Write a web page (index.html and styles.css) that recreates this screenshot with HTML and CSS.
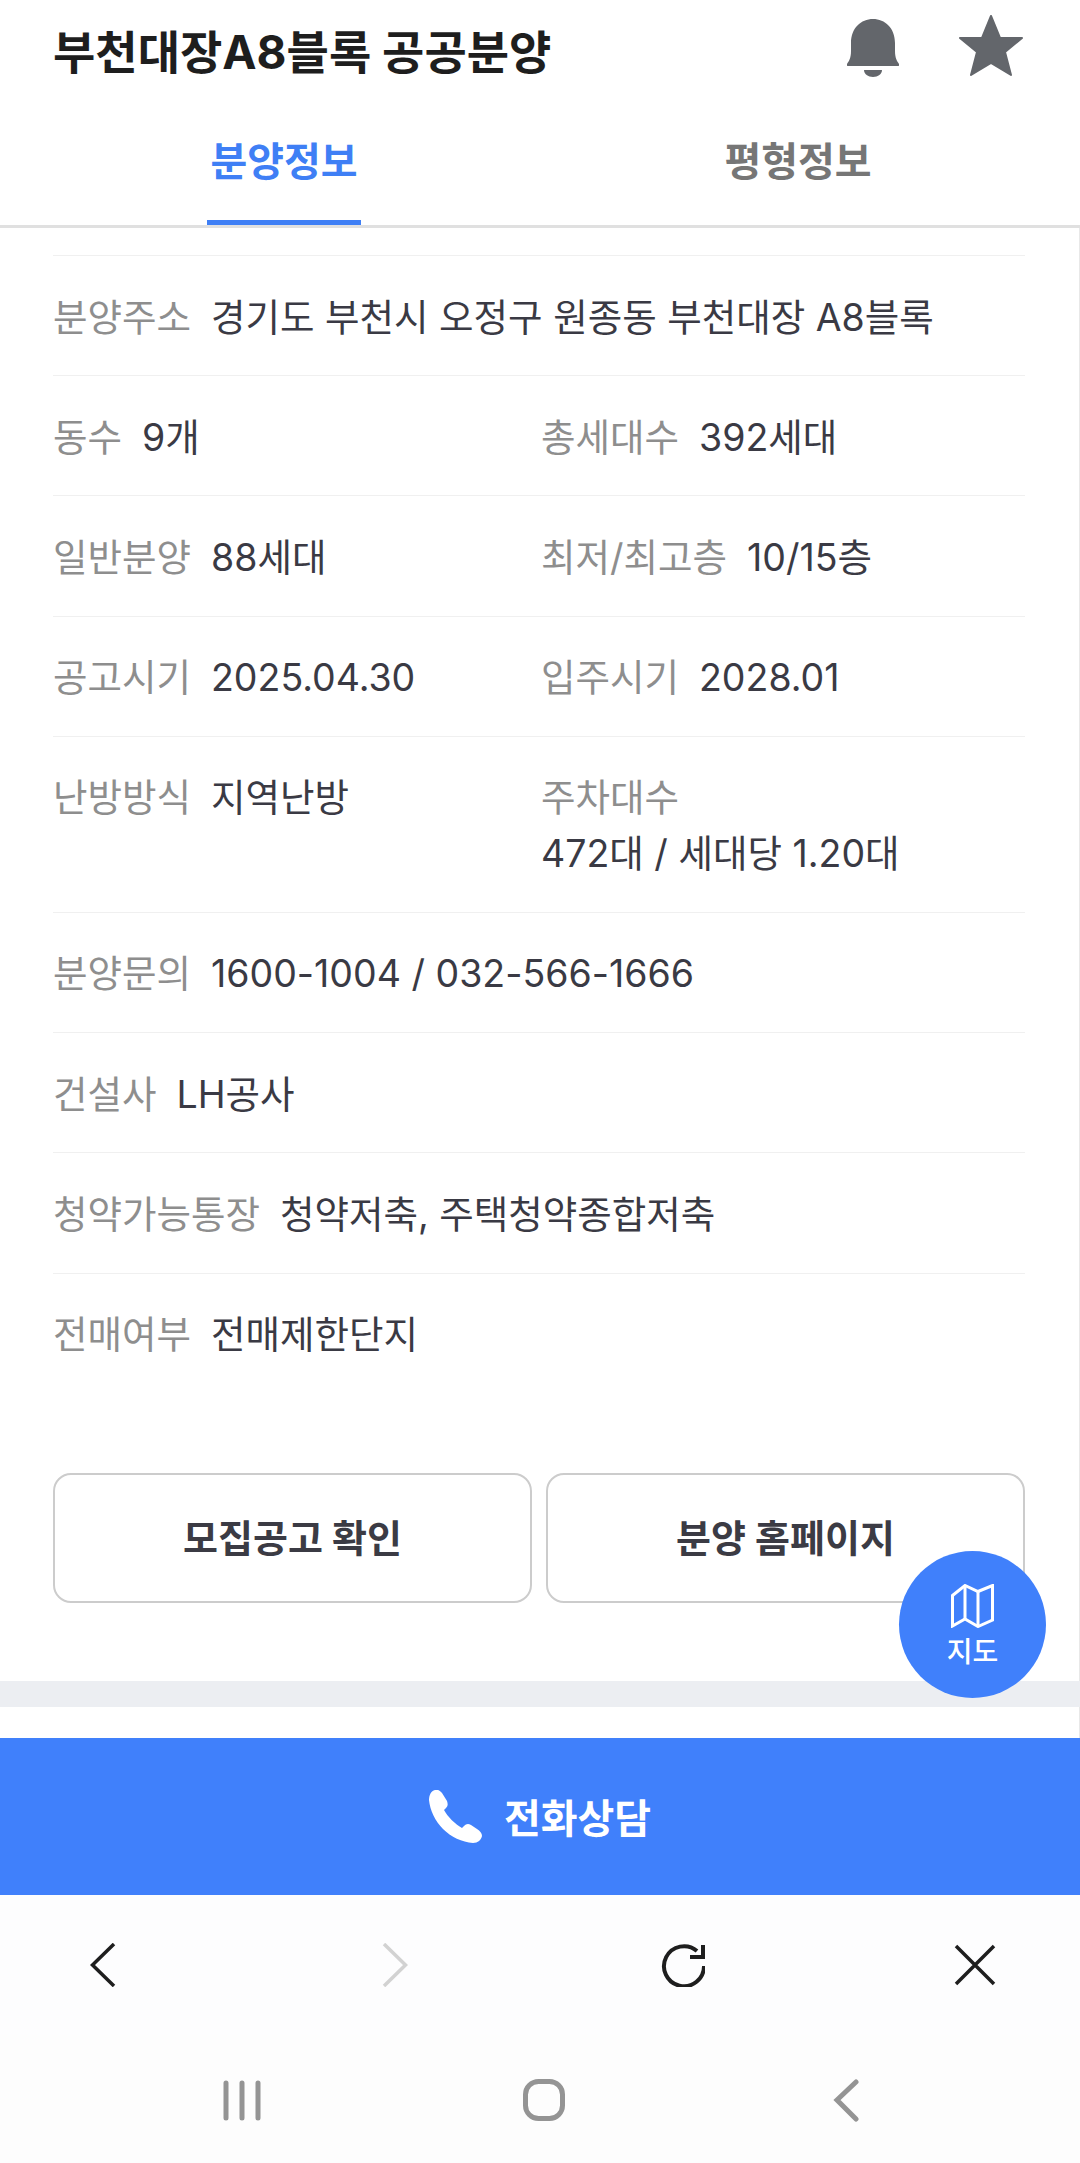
FILE: index.html
```html
<!DOCTYPE html>
<html lang="ko">
<head>
    <meta charset="UTF-8">
    <meta name="viewport" content="width=device-width, initial-scale=1.0">
    <title>부천대장A8블록 공공분양</title>
    <link rel="stylesheet" href="styles.css">
</head>
<body>
<div class="page">
    <header class="top">
        <div class="title-row">
            <h1 class="title">부천대장A8블록 공공분양</h1>
            <svg class="icon-bell" viewBox="0 0 52 58"><path d="M26 0C14 0 4 9 4 24V32C4 39 2 42 0 45Q-.5 47 1 47H51Q52.500 47 52 45C50 42 48 39 48 32V24C48 9 38 0 26 0Z"/><path d="M17 51H35C35 55 31 58 26 58C21 58 17 55 17 51Z"/></svg>
            <svg class="icon-star" viewBox="0 0 64 61"><path d="M32 1L41 23H63L46 37L52 60L32 48L12 60L18 37L1 23H23Z"/></svg>
        </div>
        <nav class="tabs">
            <a class="tab active">분양정보</a>
            <a class="tab">평형정보</a>
        </nav>
    </header>

    <main class="content">
        <div class="info">
            <div class="row">
                <div class="cell"><span class="label">분양주소</span><span class="value">경기도 부천시 오정구 원종동 부천대장 A8블록</span></div>
            </div>
            <div class="row half">
                <div class="cell"><span class="label">동수</span><span class="value">9개</span></div>
                <div class="cell"><span class="label">총세대수</span><span class="value">392세대</span></div>
            </div>
            <div class="row half">
                <div class="cell"><span class="label">일반분양</span><span class="value">88세대</span></div>
                <div class="cell"><span class="label">최저/최고층</span><span class="value">10/15층</span></div>
            </div>
            <div class="row half">
                <div class="cell"><span class="label">공고시기</span><span class="value">2025.04.30</span></div>
                <div class="cell"><span class="label">입주시기</span><span class="value">2028.01</span></div>
            </div>
            <div class="row half">
                <div class="cell"><span class="label">난방방식</span><span class="value">지역난방</span></div>
                <div class="cell stack"><span class="label">주차대수</span><span class="value">472대 / 세대당 1.20대</span></div>
            </div>
            <div class="row">
                <div class="cell"><span class="label">분양문의</span><span class="value">1600-1004 / 032-566-1666</span></div>
            </div>
            <div class="row">
                <div class="cell"><span class="label">건설사</span><span class="value">LH공사</span></div>
            </div>
            <div class="row">
                <div class="cell"><span class="label">청약가능통장</span><span class="value">청약저축, 주택청약종합저축</span></div>
            </div>
            <div class="row last">
                <div class="cell"><span class="label">전매여부</span><span class="value">전매제한단지</span></div>
            </div>
        </div>

        <div class="buttons">
            <a class="btn">모집공고 확인</a>
            <a class="btn">분양 홈페이지</a>
        </div>
    </main>

    <div class="band"></div>
    <div class="gap"></div>

    <a class="call">
        <svg class="icon-phone" viewBox="0 0 53 53"><path d="M6 0C2 1 0 5 0 10C1 20 6 31 14 39C22 47 33 52 44 53C49 53 52 50 53 46C53 43 51 41 48 39L42 35C39 33 37 34 35 36L33 38C27 35 18 26 15 20L17 18C19 16 19 14 18 11L13 3C11 1 9-1 6 0Z"/></svg>
        <span>전화상담</span>
    </a>

    <div class="browser-bar">
        <svg class="bar-icon" viewBox="0 0 44 44"><path d="M33 1L11.500 22L33 43"/></svg>
        <svg class="bar-icon off" viewBox="0 0 44 44"><path d="M11 1L32.500 22L11 43"/></svg>
        <svg class="bar-icon reload" viewBox="0 0 44 44"><path d="M43 23A20 20 0 1 1 36 8"/><path d="M29 14H42V2"/></svg>
        <svg class="bar-icon" viewBox="0 0 44 44"><path d="M3 3L41 41M41 3L3 41"/></svg>
    </div>

    <div class="nav-bar">
        <svg class="nav-icon" viewBox="0 0 44 44"><path d="M6 5V40M22 5V40M38 5V40"/></svg>
        <svg class="nav-icon" viewBox="0 0 44 44"><rect x="3.500" y="3.500" width="37" height="37" rx="13"/></svg>
        <svg class="nav-icon" viewBox="0 0 44 44"><path d="M32 4L13 22L32 41"/></svg>
    </div>

    <a class="map-btn">
        <svg class="icon-map" viewBox="0 0 43 44"><path d="M1.500 11.500L14 1.500L27 7.500L41.500 1.500V36L27 42.500L14 35L1.500 42Z"/><path d="M14 1.500V35M27 7.500V42.500"/></svg>
        <span>지도</span>
    </a>
</div>
</body>
</html>
```

FILE: styles.css
```css
* {
    margin: 0;
    padding: 0;
    box-sizing: border-box;
}

body {
    font-family: Inter, "Noto Sans CJK KR", "Noto Sans", sans-serif;
    background-color: #fff;
    color: #3a3a44;
}

.page {
    position: relative;
    width: 1080px;
    height: 2163px;
    overflow: hidden;
}

/* header */
.title-row {
    display: flex;
    height: 106px;
    padding-left: 53px;
}

.title {
    flex: 1;
    font-size: 46px;
    font-weight: 700;
    line-height: 104px;
    color: #1e1e1e;
}

.icon-bell {
    width: 52px;
    height: 58px;
    margin-top: 19px;
    fill: #63666b;
}

.icon-star {
    width: 64px;
    height: 61px;
    margin: 15px 57px 0 60px;
    fill: #63666b;
    stroke: #63666b;
    stroke-width: 2;
    stroke-linejoin: round;
}

.tabs {
    display: grid;
    grid-template-columns: 514px 514px;
    justify-content: start;
    padding-left: 27px;
    border-bottom: 3px solid #e0e0e0;
}

.tab {
    justify-self: center;
    width: 154px;
    height: 119px;
    padding-top: 27px;
    text-align: center;
    font-size: 40px;
    font-weight: 700;
    line-height: 58px;
    color: #767676;
}

.tab.active {
    color: #3f7ff5;
    border-bottom: 5px solid #3f7ff5;
}

/* info rows */
.content {
    padding: 27px 54px 0 53px;
    border-right: 1px solid #e8e8e8;
}

.info {
    border-top: 1px solid #f0f0f0;
}

.row {
    padding: 33.500px 0 29.700px;
    border-bottom: 1px solid #f0f0f0;
    font-size: 37.500px;
    line-height: 56px;
}

.row.half {
    display: grid;
    grid-template-columns: 488px 1fr;
}

.row.last {
    border-bottom: none;
}

.cell {
    white-space: nowrap;
}

.label {
    margin-right: 20px;
    color: #8e8e8e;
}

.value {
    color: #3a3a44;
}

.stack .label,
.stack .value {
    display: block;
}

/* buttons */
.buttons {
    display: flex;
    gap: 14px;
    margin-top: 80px;
    padding-bottom: 78px;
}

.btn {
    flex: 1;
    height: 130px;
    border: 2px solid #ccc;
    border-radius: 18px;
    text-align: center;
    font-size: 38px;
    font-weight: 700;
    line-height: 126px;
    color: #3b3b44;
}

.band {
    height: 26px;
    background-color: #eceef2;
}

.gap {
    height: 31px;
    border-right: 1px solid #e8e8e8;
}

.call {
    display: flex;
    align-items: center;
    justify-content: center;
    gap: 22px;
    height: 157px;
    background-color: #4080fb;
    color: #fff;
    font-size: 40px;
    font-weight: 700;
}

.icon-phone {
    width: 53px;
    height: 53px;
    fill: #fff;
}

/* browser and system bars */
.browser-bar {
    display: grid;
    grid-template-columns: 292px 288px 292px 44px;
    align-items: center;
    height: 140px;
    padding-left: 81px;
    background-color: #fdfdfe;
}

.bar-icon {
    width: 44px;
    height: 44px;
    fill: none;
    stroke: #1e1e1e;
    stroke-width: 3.500;
}

.bar-icon.off {
    stroke: #d2d2d2;
}

.bar-icon.reload {
    stroke-width: 4;
}

.nav-bar {
    display: grid;
    grid-template-columns: 302px 302px 44px;
    align-items: center;
    height: 130px;
    padding-left: 220px;
    background-color: #fdfdfd;
}

.nav-icon {
    width: 44px;
    height: 44px;
    fill: none;
    stroke: #949494;
    stroke-width: 5;
    stroke-linecap: round;
}

/* floating map button */
.map-btn {
    position: absolute;
    top: 1551px;
    right: 34px;
    display: flex;
    flex-direction: column;
    align-items: center;
    width: 147px;
    height: 147px;
    padding-top: 33px;
    border-radius: 50%;
    background-color: #4080fb;
    color: #fff;
    font-size: 28px;
    font-weight: 500;
    line-height: 40px;
}

.icon-map {
    width: 43px;
    height: 44px;
    margin-bottom: 4px;
    fill: none;
    stroke: #fff;
    stroke-width: 3;
}
```
